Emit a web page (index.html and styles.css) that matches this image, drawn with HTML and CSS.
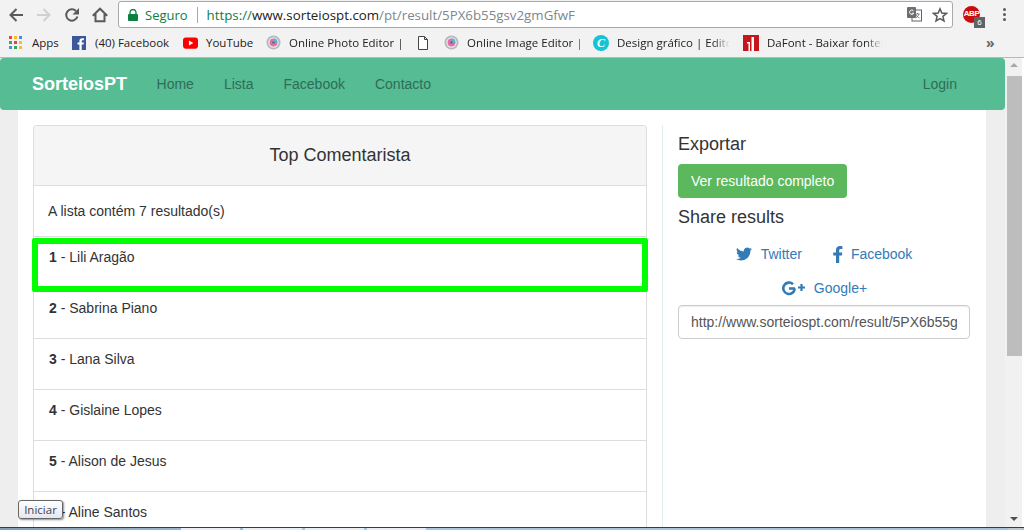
FILE: index.html
```html
<!DOCTYPE html>
<html lang="pt">
<head>
<meta charset="utf-8">
<title>SorteiosPT</title>
<link rel="stylesheet" href="styles.css">
</head>
<body>
<div class="viewport">
  <header class="chrome">
    <div class="toolbar">
      <div class="navbtns">
        <svg class="tb-ico" viewBox="0 0 16 16"><path d="M15 8H2.500M8.500 2 2.500 8l6 6" fill="none" stroke="#5a5a5a" stroke-width="2"/></svg>
        <svg class="tb-ico" viewBox="0 0 16 16"><path d="M1 8h12.500M7.500 2l6 6-6 6" fill="none" stroke="#d0d0d0" stroke-width="2"/></svg>
        <svg class="tb-ico" viewBox="0 0 16 16"><path d="M13.400 9.500A5.700 5.700 0 1 1 12 4" fill="none" stroke="#5a5a5a" stroke-width="2"/><path d="M15 1v6.500H8.500z" fill="#5a5a5a"/></svg>
        <svg class="tb-ico" viewBox="0 0 16 16"><path d="M.8 8.700 8 1.700l7.200 7M3.500 7v7.300h9V7" fill="none" stroke="#5a5a5a" stroke-width="2"/></svg>
      </div>
      <div class="omnibox">
        <svg class="lock" viewBox="0 0 10 12"><path d="M2 5V3.500a3 3 0 0 1 6 0V5" fill="none" stroke="#0b8043" stroke-width="1.300"/><rect y="5" width="10" height="7" rx="1" fill="#0b8043"/></svg>
        <span class="secure">Seguro</span>
        <span class="sep"></span>
        <span class="url"><span class="scheme">https://</span><span class="host">www.sorteiospt.com</span>/pt/result/5PX6b55gsv2gmGfwF</span>
        <svg class="translate" viewBox="0 0 15 15"><rect x="5" y="3" width="9.500" height="11" fill="#fff" stroke="#5f6368"/><rect width="9" height="11" rx="1" fill="#6b6f73"/><path d="M6.500 3.800a2.200 2.200 0 1 0 .3 2.400H4.700" fill="none" stroke="#fff"/><path d="M8.500 7h4M10.500 6v1M12 7c-.5 2-2 3.200-3.500 4M9.200 8c.6 1.300 1.800 2.400 3.300 3" fill="none" stroke="#5f6368" stroke-width=".8"/></svg>
        <svg class="star" viewBox="0 0 16 16"><path d="M8 1.800 9.800 6l4.700.4-3.600 3 1.100 4.600L8 11.600 4 14l1.100-4.600-3.600-3L6.200 6z" fill="none" stroke="#5a5a5a" stroke-width="1.500"/></svg>
      </div>
      <div class="abp"><span class="abp-mark">ABP</span><span class="abp-count">6</span></div>
      <div class="menu-dots"><i></i><i></i><i></i></div>
    </div>
    <div class="bookmarks">
      <div class="bm bm-apps">
        <span class="apps-grid"><i class="r"></i><i class="y"></i><i class="b"></i><i class="g"></i><i class="r"></i><i class="y"></i><i class="b"></i><i class="g"></i><i class="y"></i></span>
        <span>Apps</span>
      </div>
      <div class="bm bm-fb">
        <svg class="bm-ico" viewBox="0 0 14 14"><rect width="14" height="14" fill="#3b5998"/><path d="M9.700 14V8.600h1.800l.3-2.100H9.700V5.200c0-.6.200-1 1-1h1.200V2.300c-.2 0-.9-.1-1.700-.1-1.700 0-2.800 1-2.800 2.800v1.500H5.500v2.100h1.900V14z" fill="#fff"/></svg>
        <span>(40) Facebook</span>
      </div>
      <div class="bm bm-yt">
        <svg class="bm-ico yt" viewBox="0 0 16 12"><rect width="16" height="12" rx="3" fill="#f00"/><path d="M6.300 3.300v5.400L11 6z" fill="#fff"/></svg>
        <span>YouTube</span>
      </div>
      <div class="bm bm-photo">
        <svg class="bm-ico lens" viewBox="0 0 16 16"><circle cx="8" cy="8" r="7.500" fill="#b5b9bb"/><circle cx="8" cy="8" r="5.500" fill="#e8eef0"/><circle cx="8" cy="8" r="4.200" fill="#e26fa6"/><path d="M8 3.800A4.200 4.200 0 0 1 12.200 8H8z" fill="#4fb8dc"/><circle cx="8" cy="8" r="1.300" fill="#5a6f7c"/></svg>
        <span class="fade">Online Photo Editor | </span>
      </div>
      <div class="bm bm-doc">
        <svg class="bm-ico doc" viewBox="0 0 10 14"><path d="M.5.500h6l3 3v10H.5z M6.500.500v3h3" fill="#fff" stroke="#444"/></svg>
      </div>
      <div class="bm bm-image">
        <svg class="bm-ico lens" viewBox="0 0 16 16"><circle cx="8" cy="8" r="7.500" fill="#b5b9bb"/><circle cx="8" cy="8" r="5.500" fill="#e8eef0"/><circle cx="8" cy="8" r="4.200" fill="#e26fa6"/><path d="M8 3.800A4.200 4.200 0 0 1 12.200 8H8z" fill="#4fb8dc"/><circle cx="8" cy="8" r="1.300" fill="#5a6f7c"/></svg>
        <span class="fade">Online Image Editor | </span>
      </div>
      <div class="bm bm-canva">
        <span class="canva">C</span>
        <span class="fade">Design gráfico | Editor</span>
      </div>
      <div class="bm bm-dafont">
        <svg class="bm-ico df" viewBox="0 0 16 16"><rect width="16" height="16" fill="#c4161c"/><path d="M4 7h3v9H5.500V8.500H4zM8.500 2H11v14H8.500z" fill="#fff"/></svg>
        <span class="fade">DaFont - Baixar fontes</span>
      </div>
      <span class="more">»</span>
    </div>
  </header>

  <div class="frame">
    <div class="content">
      <nav class="navbar">
        <a class="brand">SorteiosPT</a>
        <a class="nav-link">Home</a>
        <a class="nav-link">Lista</a>
        <a class="nav-link">Facebook</a>
        <a class="nav-link">Contacto</a>
        <a class="nav-link login">Login</a>
      </nav>
      <div class="gutters">
        <main class="sheet">
          <section class="panel">
            <h3 class="panel-head">Top Comentarista</h3>
            <p class="panel-intro">A lista contém 7 resultado(s)</p>
            <div class="row first"><b>1</b> - Lili Aragão<span class="highlight"></span></div>
            <div class="row"><b>2</b> - Sabrina Piano</div>
            <div class="row"><b>3</b> - Lana Silva</div>
            <div class="row"><b>4</b> - Gislaine Lopes</div>
            <div class="row"><b>5</b> - Alison de Jesus</div>
            <div class="row"><b>6</b> - Aline Santos</div>
            <span class="tooltip">Iniciar</span>
          </section>
          <aside class="side">
            <h4 class="side-title">Exportar</h4>
            <a class="btn-green">Ver resultado completo</a>
            <h4 class="side-title share">Share results</h4>
            <div class="share-row">
              <a class="share-link">
                <svg class="s-ico tw" viewBox="0 0 24 24"><path fill="#337ab7" d="M23.953 4.570a10 10 0 0 1-2.825.775 4.958 4.958 0 0 0 2.163-2.723c-.951.555-2.005.959-3.127 1.184a4.920 4.920 0 0 0-8.384 4.482C7.690 8.095 4.067 6.130 1.640 3.162a4.822 4.822 0 0 0-.666 2.475c0 1.710.870 3.213 2.188 4.096a4.904 4.904 0 0 1-2.228-.616v.060a4.923 4.923 0 0 0 3.946 4.827 4.996 4.996 0 0 1-2.212.085 4.936 4.936 0 0 0 4.604 3.417 9.867 9.867 0 0 1-6.102 2.105c-.390 0-.779-.023-1.170-.067a13.995 13.995 0 0 0 7.557 2.209c9.053 0 13.998-7.496 13.998-13.985 0-.210 0-.420-.015-.630A9.935 9.935 0 0 0 24 4.590z"/></svg>
                Twitter
              </a>
              <a class="share-link">
                <svg class="s-ico fb" viewBox="0 0 11 17"><path fill="#337ab7" d="M7.200 17V9.500h2.700l.4-3H7.200V4.600c0-.9.300-1.500 1.500-1.500h1.700V.3C10.100.2 9.100.1 8 .1 5.700.1 4 1.500 4 4.200v2.300H1.200v3H4V17z"/></svg>
                Facebook
              </a>
            </div>
            <div class="share-row">
              <a class="share-link">
                <svg class="s-ico gp" viewBox="0 0 25 15"><path d="M14 7.500H8M13.700 7.500a5.700 5.700 0 1 1-1.700-4.300" fill="none" stroke="#337ab7" stroke-width="2.600"/><path d="M20.500 3v7M17 6.500h7" stroke="#337ab7" stroke-width="2.200"/></svg>
                Google+
              </a>
            </div>
            <input class="share-input" type="text" value="http://www.sorteiospt.com/result/5PX6b55gsv2gmGfwF" readonly>
          </aside>
        </main>
      </div>
    </div>
    <div class="scrollbar">
      <span class="arrow up"></span>
      <span class="thumb"></span>
      <span class="arrow down"></span>
    </div>
  </div>

  <footer class="taskbar">
    <i class="task"></i><i class="task"></i><i class="task"></i><i class="task"></i>
    <i class="tray"></i>
  </footer>
</div>
</body>
</html>
```

FILE: styles.css
```css
* { box-sizing: border-box; }
html, body { margin: 0; padding: 0; background: #fff; }
body { font-family: "Liberation Sans", Arial, sans-serif; font-size: 14px; color: #333; overflow: hidden; }
.viewport { width: 1024px; height: 530px; display: flex; flex-direction: column; overflow: hidden; }

/* browser chrome */
.chrome { height: 58px; flex: none; background: #f2f2f2; border-bottom: 1px solid #b9b9b9; font-family: "Open Sans", "Noto Sans", sans-serif; }
.toolbar { height: 33px; display: flex; align-items: flex-start; padding-top: 1px; }
.navbtns { width: 118px; flex: none; display: flex; padding: 6px 0 0 8px; gap: 12px; }
.tb-ico { width: 16px; height: 16px; flex: none; }
.omnibox { width: 835px; height: 27px; flex: none; background: #fff; border: 1px solid #a9a9a9; border-radius: 3px; display: flex; align-items: center; padding-left: 9px; font-size: 13px; }
.lock { width: 10px; height: 12px; flex: none; }
.secure { color: #0b8043; margin-left: 7px; }
.sep { width: 1px; height: 16px; background: #a8a8a8; margin: 0 9px; }
.url { color: #80868b; flex: 1; white-space: nowrap; overflow: hidden; font-size: 13.3px; }
.scheme { color: #0b8043; }
.host { color: #222; }
.translate { width: 15px; height: 15px; flex: none; margin-right: 10px; }
.star { width: 16px; height: 16px; flex: none; margin-right: 4px; }
.abp { position: relative; width: 17px; height: 17px; margin: 5px 0 0 10px; flex: none; }
.abp-mark { display: block; width: 17px; height: 17px; background: #c70d0d; border-radius: 50%; color: #fff; font: bold 8px/16px "Liberation Sans", sans-serif; letter-spacing: -.4px; text-align: center; }
.abp-count { position: absolute; left: 11px; top: 11px; width: 11px; height: 11px; background: #5f6368; color: #fff; font: 8px/11px "Liberation Sans", sans-serif; text-align: center; }
.menu-dots { display: flex; flex-direction: column; gap: 2px; margin: 7px 0 0 23px; }
.menu-dots i { width: 3px; height: 3px; background: #5a5a5a; border-radius: 50%; display: block; }

.bookmarks { height: 19px; display: flex; align-items: center; padding-left: 9px; font-size: 11.5px; color: #222; white-space: nowrap; }
.bm { display: flex; align-items: center; gap: 9px; flex: none; overflow: hidden; }
.bm-apps { width: 63px; } .bm-fb { width: 111px; } .bm-yt { width: 83px; } .bm-photo { width: 152px; }
.bm-doc { width: 26px; } .bm-image { width: 149px; } .bm-canva { width: 150px; padding-right: 13px; } .bm-dafont { width: 140px; }
.bm-ico { width: 14px; height: 14px; flex: none; }
.bm-ico.yt { width: 15px; height: 12px; margin-right: -1px; }
.bm-ico.lens { width: 15px; height: 15px; margin-right: -1px; }
.bm-ico.df { width: 16px; height: 16px; margin-right: -1px; }
.bm-ico.doc { width: 10px; height: 14px; }
.fade { overflow: hidden; flex: 1; -webkit-mask-image: linear-gradient(to right, #000 85%, transparent); mask-image: linear-gradient(to right, #000 85%, transparent); }
.apps-grid { width: 13px; height: 13px; display: grid; grid-template-columns: repeat(3, 3px); grid-auto-rows: 3px; gap: 2px; flex: none; margin-right: 1px; }
.apps-grid i { display: block; }
.apps-grid .r { background: #e8453c; } .apps-grid .y { background: #f9bb2d; } .apps-grid .b { background: #4a8af4; } .apps-grid .g { background: #3aa757; }
.canva { width: 16px; height: 16px; flex: none; margin-right: -1px; border-radius: 50%; background: #14c4d4; color: #fff; font: italic bold 12px/16px "Liberation Serif", serif; text-align: center; }
.more { margin-left: 103px; color: #666; font-size: 14px; font-weight: 700; }

/* page */
.frame { flex: 1; min-height: 0; display: flex; }
.content { width: 1005px; flex: none; display: flex; flex-direction: column; background: #eee; }
.navbar { height: 52px; flex: none; background: #56bc94; border-radius: 4px; display: flex; align-items: center; padding: 0 33px 0 32px; }
.brand { color: #fff; font-size: 18px; font-weight: 700; margin-right: 14.5px; }
.nav-link { color: #2f6d57; padding: 0 15px; }
.login { margin-left: auto; }
.gutters { flex: 1; min-height: 0; padding: 0 19px 0 18px; }
.sheet { height: 100%; background: #fff; display: flex; padding: 15px 0 0 15px; overflow: hidden; }
.panel { width: 614px; flex: none; border: 1px solid #ddd; border-radius: 4px 4px 0 0; border-bottom: 0; position: relative; overflow: visible; }
.panel-head { margin: 0; height: 60px; background: #f5f5f5; border-bottom: 1px solid #ddd; border-radius: 3px 3px 0 0; font-size: 18px; font-weight: 400; line-height: 58px; text-align: center; color: #333; }
.panel-intro { margin: 0; height: 50px; padding: 15px 14px; line-height: 20px; }
.row { position: relative; height: 51px; border-top: 1px solid #ddd; padding: 10px 15px 0; line-height: 20px; }
.highlight { position: absolute; z-index: 1; left: -2px; right: -2px; top: 1px; height: 54px; border: 6px solid #0f0; border-radius: 2px; }
.tooltip { position: absolute; z-index: 2; left: -16px; top: 374px; width: 45px; height: 19px; background: linear-gradient(#fff, #e6e6f2); border: 1px solid #666; border-radius: 3px; box-shadow: 1px 1px 2px rgba(0,0,0,.45); font: 11.5px/17px "Open Sans", sans-serif; text-align: center; color: #444; }
.side { flex: 1; margin-left: 15px; border-left: 1px solid #e0f0f0; padding: 9px 16px 0 15px; }
.side-title { margin: 0; font-size: 18px; font-weight: 400; line-height: 20px; color: #333; }
.side-title.share { margin-top: 9px; }
.btn-green { display: inline-block; height: 34px; margin-top: 10px; padding: 0 13px; background: #5cb85c; border-radius: 4px; color: #fff; line-height: 34px; vertical-align: top; }
.share-row { height: 34px; display: flex; justify-content: center; align-items: center; gap: 30px; margin-top: 0; }
.side-title.share + .share-row { margin-top: 10px; }
.share-link { color: #337ab7; display: flex; align-items: center; }
.s-ico { flex: none; }
.s-ico.tw { width: 16px; height: 16px; margin-right: 9px; }
.s-ico.fb { width: 11px; height: 17px; margin-right: 8px; }
.s-ico.gp { width: 25px; height: 15px; margin-right: 8px; }
.share-input { display: block; width: 292px; height: 34px; margin-top: 0; padding: 0 12px; border: 1px solid #ccc; border-radius: 4px; font: 14px "Liberation Sans", sans-serif; color: #555; box-shadow: inset 0 1px 1px rgba(0,0,0,.075); outline: 0; }

/* scrollbar */
.scrollbar { width: 17px; flex: none; background: #f1f1f1; display: flex; flex-direction: column; align-items: center; padding-top: 5px; }
.thumb { width: 15px; height: 280px; background: #bdbdbd; margin-top: 9px; margin-left: 1px; }
.arrow { width: 0; height: 0; border-left: 4px solid transparent; border-right: 4px solid transparent; flex: none; }
.arrow.up { border-bottom: 4px solid #a9a9a9; }
.arrow.down { border-top: 4px solid #505050; margin-top: auto; margin-bottom: 6px; }

/* taskbar */
.taskbar { height: 3px; flex: none; background: linear-gradient(90deg, #7f9cb8, #a9c6e2 30%, #a4c2df); border-top: 1px solid #2f3d4c; display: flex; padding-left: 181px; gap: 3px; position: relative; }
.task { width: 59px; background: #e8eef4; display: block; }
.tray { width: 14px; background: #c0c8cf; margin-left: auto; margin-right: 2px; }
```
